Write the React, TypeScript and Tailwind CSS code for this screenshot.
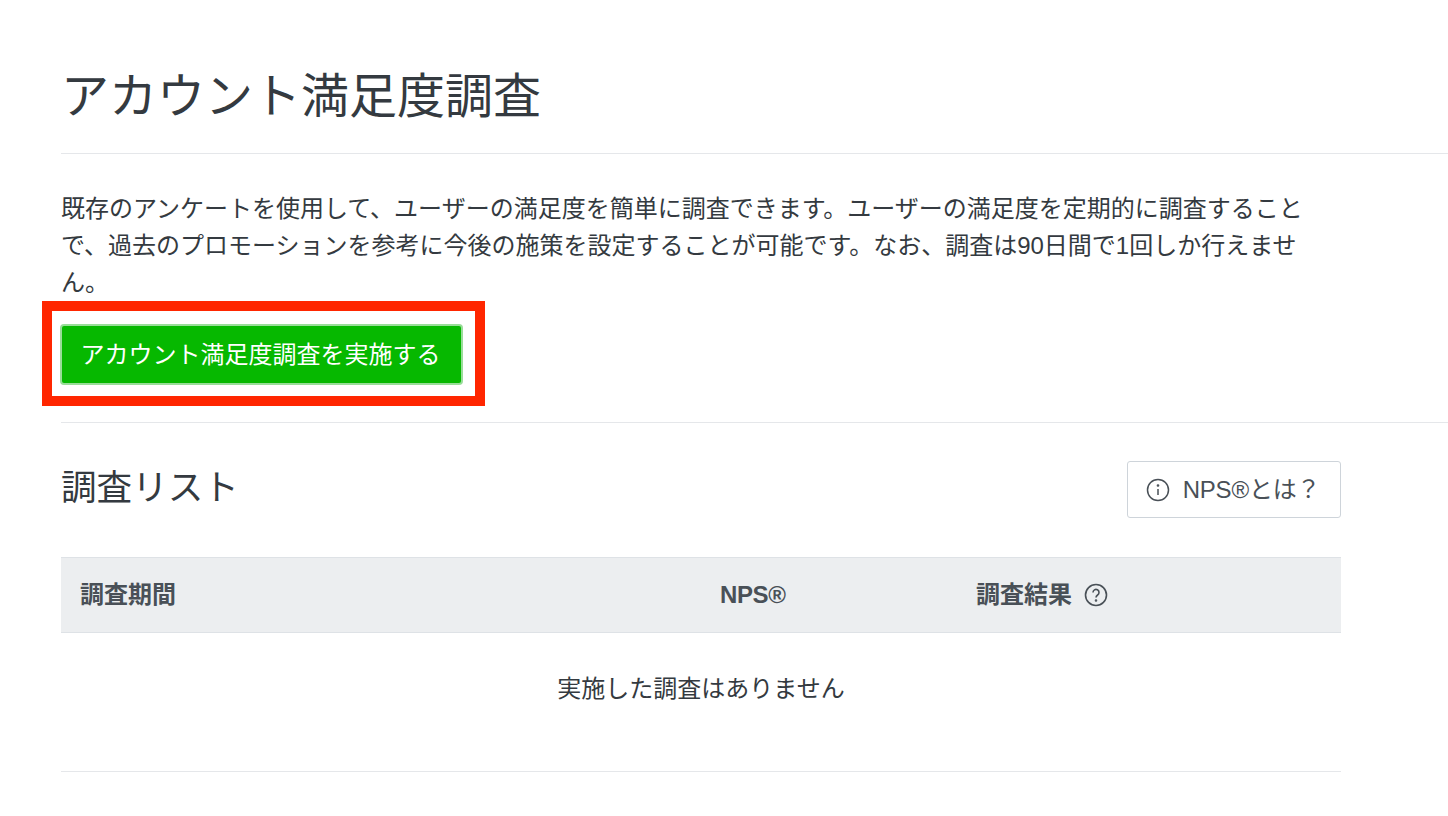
import React from 'react';

const font = { fontFamily: '"Liberation Sans", "Noto Sans CJK JP", sans-serif' };

function InfoIcon() {
  return (
    <svg width="24" height="24" viewBox="0 0 24 24" fill="none" stroke="#495057" strokeWidth="1.5">
      <circle cx="12" cy="12" r="10.5" />
      <path d="M12 11v6" />
      <circle cx="12" cy="7.5" r="0.6" fill="#495057" />
    </svg>
  );
}

function HelpIcon() {
  return (
    <svg width="24" height="24" viewBox="0 0 24 24" fill="none" stroke="#495057" strokeWidth="1.6">
      <circle cx="12" cy="12" r="10.5" />
      <path d="M9 9.5a3 3 0 1 1 4.6 2.5c-1 .7-1.6 1.2-1.6 2.5" />
      <circle cx="12" cy="17.5" r="0.5" fill="#495057" />
    </svg>
  );
}

export default function App() {
  return (
    <div className="relative h-[816px] w-[1448px] overflow-hidden bg-white pl-[61px] text-[#343a40]" style={font}>
      <div className="flex h-[154px] items-center border-b border-[#e5e7ea] pt-[41px] pb-[1px]">
        <h1 className="text-[48px] leading-[72px] font-normal">アカウント満足度調査</h1>
      </div>

      <div className="h-[268px] w-[1280px] pt-[36px]">
        <p className="text-[24px] leading-[37px] text-[#343a40]">
          既存のアンケートを使用して、ユーザーの満足度を簡単に調査できます。ユーザーの満足度を定期的に調査することで、過去のプロモーションを参考に今後の施策を設定することが可能です。なお、調査は90日間で1回しか行えません。
        </p>
        <button className="mt-[23px] -ml-[1px] flex h-[61px] w-[403px] items-center justify-center rounded-[4px] border-2 border-[#99dd99] bg-[#06b800] pr-[2px] text-[24px] text-white">
          アカウント満足度調査を実施する
        </button>
      </div>

      <div className="border-t border-[#e5e7ea]">
        <div className="flex h-[134px] w-[1280px] items-start justify-between">
          <h2 className="pt-[39px] text-[35.6px] leading-[52px] font-normal">調査リスト</h2>
          <button className="mt-[38px] flex h-[57px] w-[214px] items-center justify-center gap-[13px] rounded-[3px] border border-[#ced4da] pr-[2px] text-[24px] tracking-[-0.2px] text-[#495057]">
            <InfoIcon />
            <span>NPS®とは？</span>
          </button>
        </div>

        <div className="flex h-[76px] w-[1280px] items-center border-y border-[#dee2e6] bg-[#eceef0] text-[24px] font-bold text-[#495057]">
          <div className="w-[659px] pl-[19px]">調査期間</div>
          <div className="w-[256px] tracking-[-0.4px]">NPS®</div>
          <div className="flex items-center gap-[12px]">
            <span>調査結果</span>
            <HelpIcon />
          </div>
        </div>

        <div className="flex h-[139px] w-[1280px] justify-center border-b border-[#e5e7ea] pt-[37px] text-[24px] leading-[37px]">
          実施した調査はありません
        </div>
      </div>

      {/* annotation frame over the button */}
      <div className="absolute top-[301px] left-[42px] h-[105px] w-[443px] border-[10px] border-[#ff2600]" />
    </div>
  );
}
